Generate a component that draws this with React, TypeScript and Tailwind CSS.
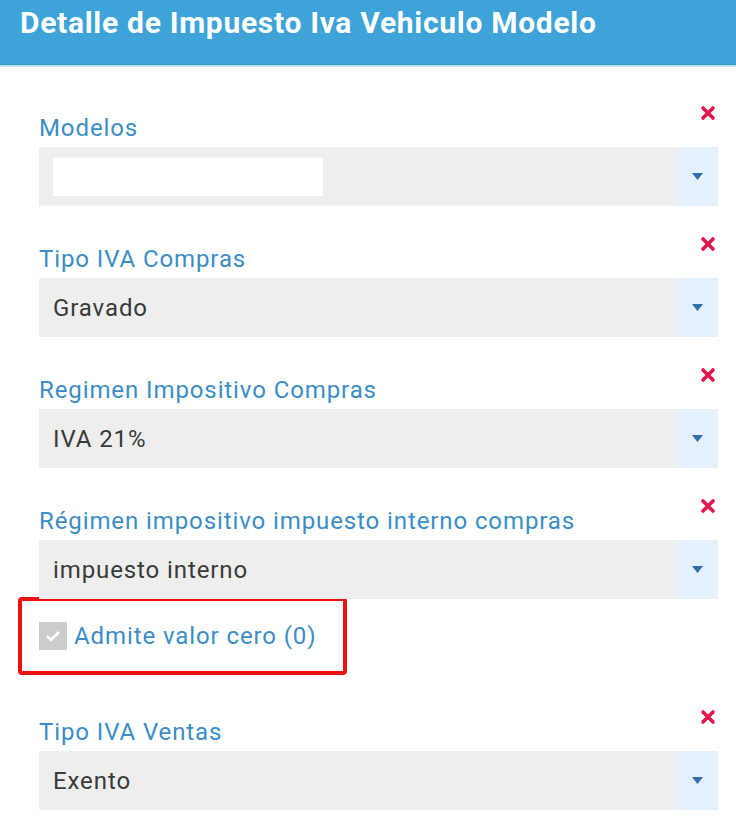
import React from "react";

const FIELDS_TOP = [
  { label: "Modelos", value: "", blank: true },
  { label: "Tipo IVA Compras", value: "Gravado" },
  { label: "Regimen Impositivo Compras", value: "IVA 21%" },
  { label: "Régimen impositivo impuesto interno compras", value: "impuesto interno" },
];

function RemoveX() {
  return (
    <svg width="16" height="16" viewBox="0 0 16 16" className="block">
      <path d="M3 3 L13 13 M13 3 L3 13" stroke="#e0174b" strokeWidth="3.6" strokeLinecap="round" />
    </svg>
  );
}

function SelectField({ label, value, blank }: { label: string; value: string; blank?: boolean }) {
  return (
    <div className="flex flex-col">
      <div className="flex items-end justify-between h-[48px]">
        <span className="text-[24px] leading-[28px] tracking-[0.9px] text-[#3b8dc5] pb-[5px]">{label}</span>
        <span className="mr-[2px] mb-[26px]"><RemoveX /></span>
      </div>
      <div className="flex h-[59px] bg-[#eeeeee]">
        <div className="flex-1 flex items-center pl-[14px] text-[24px] tracking-[0.9px] text-[#3a3a3a]">
          {blank ? <div className="w-[270px] h-[38px] bg-white" /> : value}
        </div>
        <div className="w-[41px] bg-[#e4f1fc] flex items-center justify-center">
          <svg width="11" height="7" viewBox="0 0 11 7">
            <path d="M0 0 H11 L5.5 7 Z" fill="#2f6fae" />
          </svg>
        </div>
      </div>
    </div>
  );
}

export default function App() {
  return (
    <div className="w-[736px] h-[826px] bg-white overflow-hidden" style={{ fontFamily: "Roboto, 'Liberation Sans', sans-serif" }}>
      <div className="h-[64px] bg-[#3ea3d8] pl-[20px] pt-[4px]">
        <h1 className="text-[30px] leading-[38px] tracking-[0.7px] font-bold text-white">Detalle de Impuesto Iva Vehiculo Modelo</h1>
      </div>
      <div className="h-[1px] bg-[#3a94c6]" />
      <div className="h-[2px] bg-[#bfe2f5]" />
      <div className="pl-[39px] pr-[18px] pt-[32px] flex flex-col gap-[24px]">
        {FIELDS_TOP.map((f) => (
          <SelectField key={f.label} {...f} />
        ))}
      </div>
      <div className="ml-[18px] mt-[-2px] w-[329px] h-[78px] border-[4px] border-[#ee1111] rounded-[4px] flex items-center pl-[17px] gap-[7px]">
        <div className="w-[28px] h-[28px] bg-[#cccccc] flex items-center justify-center">
          <svg width="16" height="12" viewBox="0 0 16 12">
            <path d="M2 6 L6 10 L14 2" stroke="white" strokeWidth="2.6" fill="none" />
          </svg>
        </div>
        <span className="text-[24px] tracking-[0.9px] text-[#3b8dc5]">Admite valor cero (0)</span>
      </div>
      <div className="pl-[39px] pr-[18px] mt-[28px]">
        <SelectField label="Tipo IVA Ventas" value="Exento" />
      </div>
    </div>
  );
}
